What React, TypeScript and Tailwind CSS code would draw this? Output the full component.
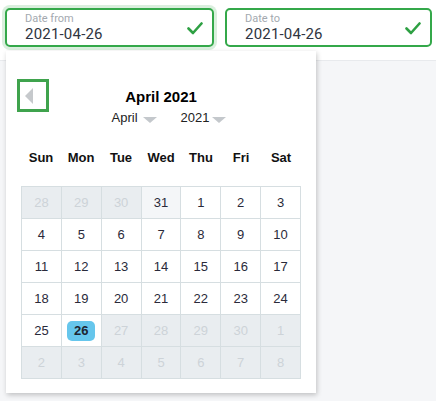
import React from "react";

const Check = () => (
  <svg width="16" height="13" viewBox="0 0 16 13" fill="none">
    <path d="M1.5 6.5 L6 11 L14.5 1.5" stroke="#2ea043" strokeWidth="2.6" strokeLinecap="round" strokeLinejoin="round" />
  </svg>
);

const Caret = () => (
  <svg width="14" height="7" viewBox="0 0 14 7">
    <path d="M0 0 L14 0 L7 6 Z" fill="#c4c8cc" />
  </svg>
);

type Cell = { d: number; kind: "out" | "prev" | "in" | "sel" };

const weeks: Cell[][] = [
  [
    { d: 28, kind: "out" },
    { d: 29, kind: "out" },
    { d: 30, kind: "out" },
    { d: 31, kind: "prev" },
    { d: 1, kind: "in" },
    { d: 2, kind: "in" },
    { d: 3, kind: "in" },
  ],
  [4, 5, 6, 7, 8, 9, 10].map((d) => ({ d, kind: "in" as const })),
  [11, 12, 13, 14, 15, 16, 17].map((d) => ({ d, kind: "in" as const })),
  [18, 19, 20, 21, 22, 23, 24].map((d) => ({ d, kind: "in" as const })),
  [
    { d: 25, kind: "in" },
    { d: 26, kind: "sel" },
    { d: 27, kind: "out" },
    { d: 28, kind: "out" },
    { d: 29, kind: "out" },
    { d: 30, kind: "out" },
    { d: 1, kind: "out" },
  ],
  [2, 3, 4, 5, 6, 7, 8].map((d) => ({ d, kind: "out" as const })),
];

const Field = ({ label, w, glow }: { label: string; w: string; glow?: boolean }) => (
  <div
    className={`${w} h-[39px] border-2 border-[#34a84a] rounded-[5px] bg-white flex items-center pl-[18px] pr-[9px] ${
      glow ? "shadow-[0_0_0_3px_rgba(52,168,74,0.18)]" : ""
    }`}
  >
    <div className="flex-1 flex flex-col pt-[1px]">
      <span className="text-[11px] leading-[13px] text-[#a3a9b0]" style={{ fontFamily: "Roboto, sans-serif" }}>
        {label}
      </span>
      <span className="text-[15px] leading-[19px] text-[#2f3541] tracking-[0.2px]" style={{ fontFamily: "Roboto, sans-serif" }}>
        2021-04-26
      </span>
    </div>
    <div className="mt-[2px]">
      <Check />
    </div>
  </div>
);

export default function App() {
  return (
    <div className="relative w-[436px] h-[401px] bg-[#f5f6f8] overflow-hidden" style={{ fontFamily: '"Liberation Sans", Arial, sans-serif' }}>
      <div className="h-[61px] bg-white border-b border-[#e8eaed] flex items-start pt-[8px] pl-[5px] gap-[11px]">
        <Field label="Date from" w="w-[209px]" glow />
        <Field label="Date to" w="w-[207px]" />
      </div>

      <div className="absolute left-[6px] top-[51px] w-[310px] h-[342px] bg-white shadow-[1px_2px_5px_rgba(0,0,0,0.22)] px-[15px]">
        <div className="absolute left-[11px] top-[28px] w-[32px] h-[33px] border-[3px] border-[#3fa34d] flex items-center pl-[5px]">
          <svg width="8" height="16" viewBox="0 0 8 16">
            <path d="M8 0 L8 16 L0 8 Z" fill="#c6c9cc" />
          </svg>
        </div>
        <div className="pt-[37px] flex flex-col items-center">
          <div className="text-[15px] leading-[18px] font-bold text-black">April 2021</div>
          <div className="mt-[3px] pl-[16px] flex items-center h-[18px] text-[13px] text-[#222]">
            <span>April</span>
            <span className="ml-[5px] mt-[4px]"><Caret /></span>
            <span className="ml-[24px]">2021</span>
            <span className="ml-[3px] mt-[4px]"><Caret /></span>
          </div>
        </div>
        <div className="mt-[22px] grid grid-cols-7 h-[18px] text-[13px] font-bold text-[#111] leading-[18px]">
          {["Sun", "Mon", "Tue", "Wed", "Thu", "Fri", "Sat"].map((d) => (
            <div key={d} className="text-center">{d}</div>
          ))}
        </div>
        <div className="mt-[19px] w-[280px] border-l border-t border-[#d6dee1]">
          {weeks.map((row, i) => (
            <div key={i} className="grid grid-cols-7">
              {row.map((c, j) => (
                <div
                  key={j}
                  className={`h-[32px] border-r border-b border-[#d6dee1] flex items-center justify-center text-[13px] ${
                    c.kind === "out"
                      ? "bg-[#e9edf0] text-[#cdd3d8]"
                      : c.kind === "prev"
                      ? "bg-[#f4f6f8] text-[#2a2a3a]"
                      : "bg-white text-[#2a2a3a]"
                  }`}
                >
                  {c.kind === "sel" ? (
                    <span className="w-[28px] h-[20px] rounded-[5px] bg-[#66c6ec] font-bold text-[#1d2430] flex items-center justify-center">
                      {c.d}
                    </span>
                  ) : (
                    c.d
                  )}
                </div>
              ))}
            </div>
          ))}
        </div>
      </div>
    </div>
  );
}
